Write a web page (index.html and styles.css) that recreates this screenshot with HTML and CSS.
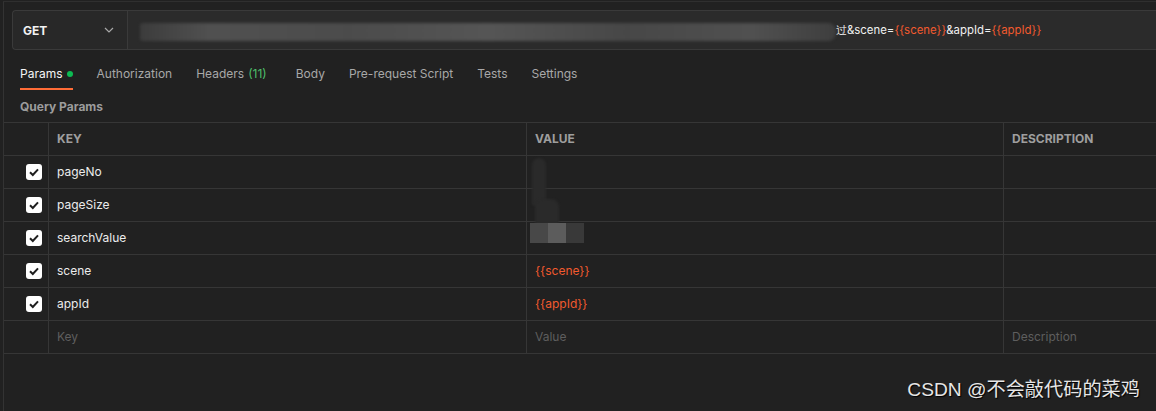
FILE: index.html
```html
<!DOCTYPE html>
<html lang="en">
<head>
<meta charset="utf-8">
<title>Params</title>
<link rel="stylesheet" href="styles.css">
</head>
<body>
<div class="frame">
  <div class="urlbar">
    <div class="method">
      <span class="method-name">GET</span>
      <svg class="chevron" width="10" height="6" viewBox="0 0 10 6"><path d="M1 1 L5 5 L9 1" fill="none" stroke="#a8a8a8" stroke-width="1.2"/></svg>
    </div>
    <div class="url">
      <span class="redact"></span>
      <span class="url-text">过&amp;scene=<span class="var">{{scene}}</span>&amp;appId=<span class="var">{{appId}}</span></span>
    </div>
  </div>

  <div class="tabs">
    <div class="tab active">Params <span class="dot"></span></div>
    <div class="tab">Authorization</div>
    <div class="tab wide">Headers <span class="count">(11)</span></div>
    <div class="tab">Body</div>
    <div class="tab">Pre-request Script</div>
    <div class="tab">Tests</div>
    <div class="tab">Settings</div>
  </div>

  <div class="section-title">Query Params</div>

  <div class="table">
    <div class="row head">
      <div class="cell check"></div>
      <div class="cell">KEY</div>
      <div class="cell">VALUE</div>
      <div class="cell">DESCRIPTION</div>
    </div>
    <div class="row">
      <div class="cell check"><svg class="cb" width="16" height="16" viewBox="0 0 16 16"><rect x="0" y="0" width="16" height="16" rx="3" fill="#fff"/><path d="M4 8.3 L6.8 11 L12 5.3" fill="none" stroke="#1f1f1f" stroke-width="2"/></svg></div>
      <div class="cell">pageNo</div>
      <div class="cell"></div>
      <div class="cell"></div>
    </div>
    <div class="row">
      <div class="cell check"><svg class="cb" width="16" height="16" viewBox="0 0 16 16"><rect x="0" y="0" width="16" height="16" rx="3" fill="#fff"/><path d="M4 8.3 L6.8 11 L12 5.3" fill="none" stroke="#1f1f1f" stroke-width="2"/></svg></div>
      <div class="cell">pageSize</div>
      <div class="cell"></div>
      <div class="cell"></div>
    </div>
    <div class="row">
      <div class="cell check"><svg class="cb" width="16" height="16" viewBox="0 0 16 16"><rect x="0" y="0" width="16" height="16" rx="3" fill="#fff"/><path d="M4 8.3 L6.8 11 L12 5.3" fill="none" stroke="#1f1f1f" stroke-width="2"/></svg></div>
      <div class="cell">searchValue</div>
      <div class="cell"></div>
      <div class="cell"></div>
    </div>
    <div class="row">
      <div class="cell check"><svg class="cb" width="16" height="16" viewBox="0 0 16 16"><rect x="0" y="0" width="16" height="16" rx="3" fill="#fff"/><path d="M4 8.3 L6.8 11 L12 5.3" fill="none" stroke="#1f1f1f" stroke-width="2"/></svg></div>
      <div class="cell">scene</div>
      <div class="cell var">{{scene}}</div>
      <div class="cell"></div>
    </div>
    <div class="row">
      <div class="cell check"><svg class="cb" width="16" height="16" viewBox="0 0 16 16"><rect x="0" y="0" width="16" height="16" rx="3" fill="#fff"/><path d="M4 8.3 L6.8 11 L12 5.3" fill="none" stroke="#1f1f1f" stroke-width="2"/></svg></div>
      <div class="cell">appId</div>
      <div class="cell var">{{appId}}</div>
      <div class="cell"></div>
    </div>
    <div class="row">
      <div class="cell check"></div>
      <div class="cell ph">Key</div>
      <div class="cell ph">Value</div>
      <div class="cell ph">Description</div>
    </div>
    <div class="blob blob-a"></div>
    <div class="blob blob-b"></div>
    <div class="tiles"><span class="t1"></span><span class="t2"></span><span class="t3"></span></div>
  </div>

  <div class="watermark">CSDN @不会敲代码的菜鸡</div>
</div>
</body>
</html>
```

FILE: styles.css
```css
html, body {
  margin: 0;
  padding: 0;
  background: #212121;
  height: 100%;
  overflow: hidden;
}
body {
  font-family: Inter, "Liberation Sans", sans-serif;
  font-size: 12px;
  color: #e8e8e8;
}
.frame {
  position: relative;
  margin: 1px 0 0 3px;
  border-left: 1px solid #333333;
  border-top: 1px solid #2f2f2f;
  height: 410px;
  box-sizing: border-box;
}
.urlbar {
  display: flex;
  margin: 8px 0 0 8px;
  height: 40px;
  box-sizing: border-box;
  border: 1px solid #3a3a3a;
  border-right: none;
  border-radius: 4px 0 0 4px;
  background: #2b2b2b;
}
.method {
  width: 115px;
  box-sizing: border-box;
  border-right: 1px solid #3a3a3a;
  background: #282828;
  border-radius: 4px 0 0 4px;
  display: flex;
  align-items: center;
  padding-left: 10px;
  padding-right: 13px;
}
.method-name {
  flex: 1;
  font-weight: 700;
  font-size: 12px;
  color: #f2f2f2;
}
.chevron { display: block; }
.url {
  flex: 1;
  display: flex;
  align-items: center;
  padding-left: 12px;
}
.redact {
  display: block;
  width: 696px;
  height: 18px;
  margin-top: 4px;
  background: linear-gradient(90deg, #3c3c3c 0%, #505050 10%, #4b4b4b 30%, #555 50%, #474747 70%, #505050 88%, #3e3e3e 100%);
  filter: blur(1.5px);
  border-radius: 3px 8px 8px 3px;
}
.url-text {
  color: #f0f0f0;
  font-size: 11.4px;
}
.var { color: #f25a2e; }

.tabs {
  display: flex;
  gap: 24px;
  padding-left: 16px;
  margin-top: 16px;
}
.tab {
  line-height: 16px;
  padding-bottom: 6px;
  border-bottom: 2px solid transparent;
  color: #a8a8a8;
  font-size: 12px;
  display: flex;
  align-items: center;
}
.tab.active {
  color: #f5f5f5;
  border-bottom-color: #ff6c37;
}
.tab.wide { margin-right: 5px; }
.dot {
  display: inline-block;
  width: 6px;
  height: 6px;
  border-radius: 50%;
  background: #0cbb52;
  margin-left: 4px;
}
.count { color: #4fbf6a; margin-left: 4px; }

.section-title {
  margin: 9px 0 0 16px;
  line-height: 16px;
  font-weight: 700;
  color: #9c9c9c;
  font-size: 12px;
}

.table {
  position: relative;
  margin-top: 7px;
  border-top: 1px solid #363636;
}
.row {
  display: grid;
  grid-template-columns: 45px 478px 477px 1fr;
  height: 33px;
  box-sizing: border-box;
  border-bottom: 1px solid #363636;
}
.cell {
  border-right: 1px solid #363636;
  display: flex;
  align-items: center;
  padding-left: 8px;
  padding-bottom: 2px;
  color: #ececec;
  font-size: 12px;
}
.cell:last-child { border-right: none; }
.cell.check { padding-left: 22px; padding-bottom: 0; }
.cb { display: block; }
.head .cell {
  font-weight: 700;
  color: #9e9e9e;
}
.cell.ph { color: #5e5e5e; }
.cell.var { color: #f25a2e; }

.blob {
  position: absolute;
  background: #2a2a2a;
  filter: blur(1px);
}
.blob-a {
  left: 528px;
  top: 35px;
  width: 14px;
  height: 48px;
  border-radius: 7px 7px 2px 2px;
}
.blob-b {
  left: 531px;
  top: 76px;
  width: 24px;
  height: 30px;
  border-radius: 8px 8px 0 0;
}
.tiles {
  position: absolute;
  left: 526px;
  top: 100px;
  display: flex;
}
.tiles span { display: block; width: 18px; height: 20px; }
.t1 { background: #484848; }
.t2 { background: #5c5c5c; }
.t3 { background: #393939; }

.watermark {
  position: absolute;
  right: 16px;
  bottom: 9px;
  font-family: "Liberation Sans", "Noto Sans CJK SC", sans-serif;
  font-size: 19.2px;
  color: #e6e6e6;
  text-shadow: 1px 1px 1px #000;
}
```
